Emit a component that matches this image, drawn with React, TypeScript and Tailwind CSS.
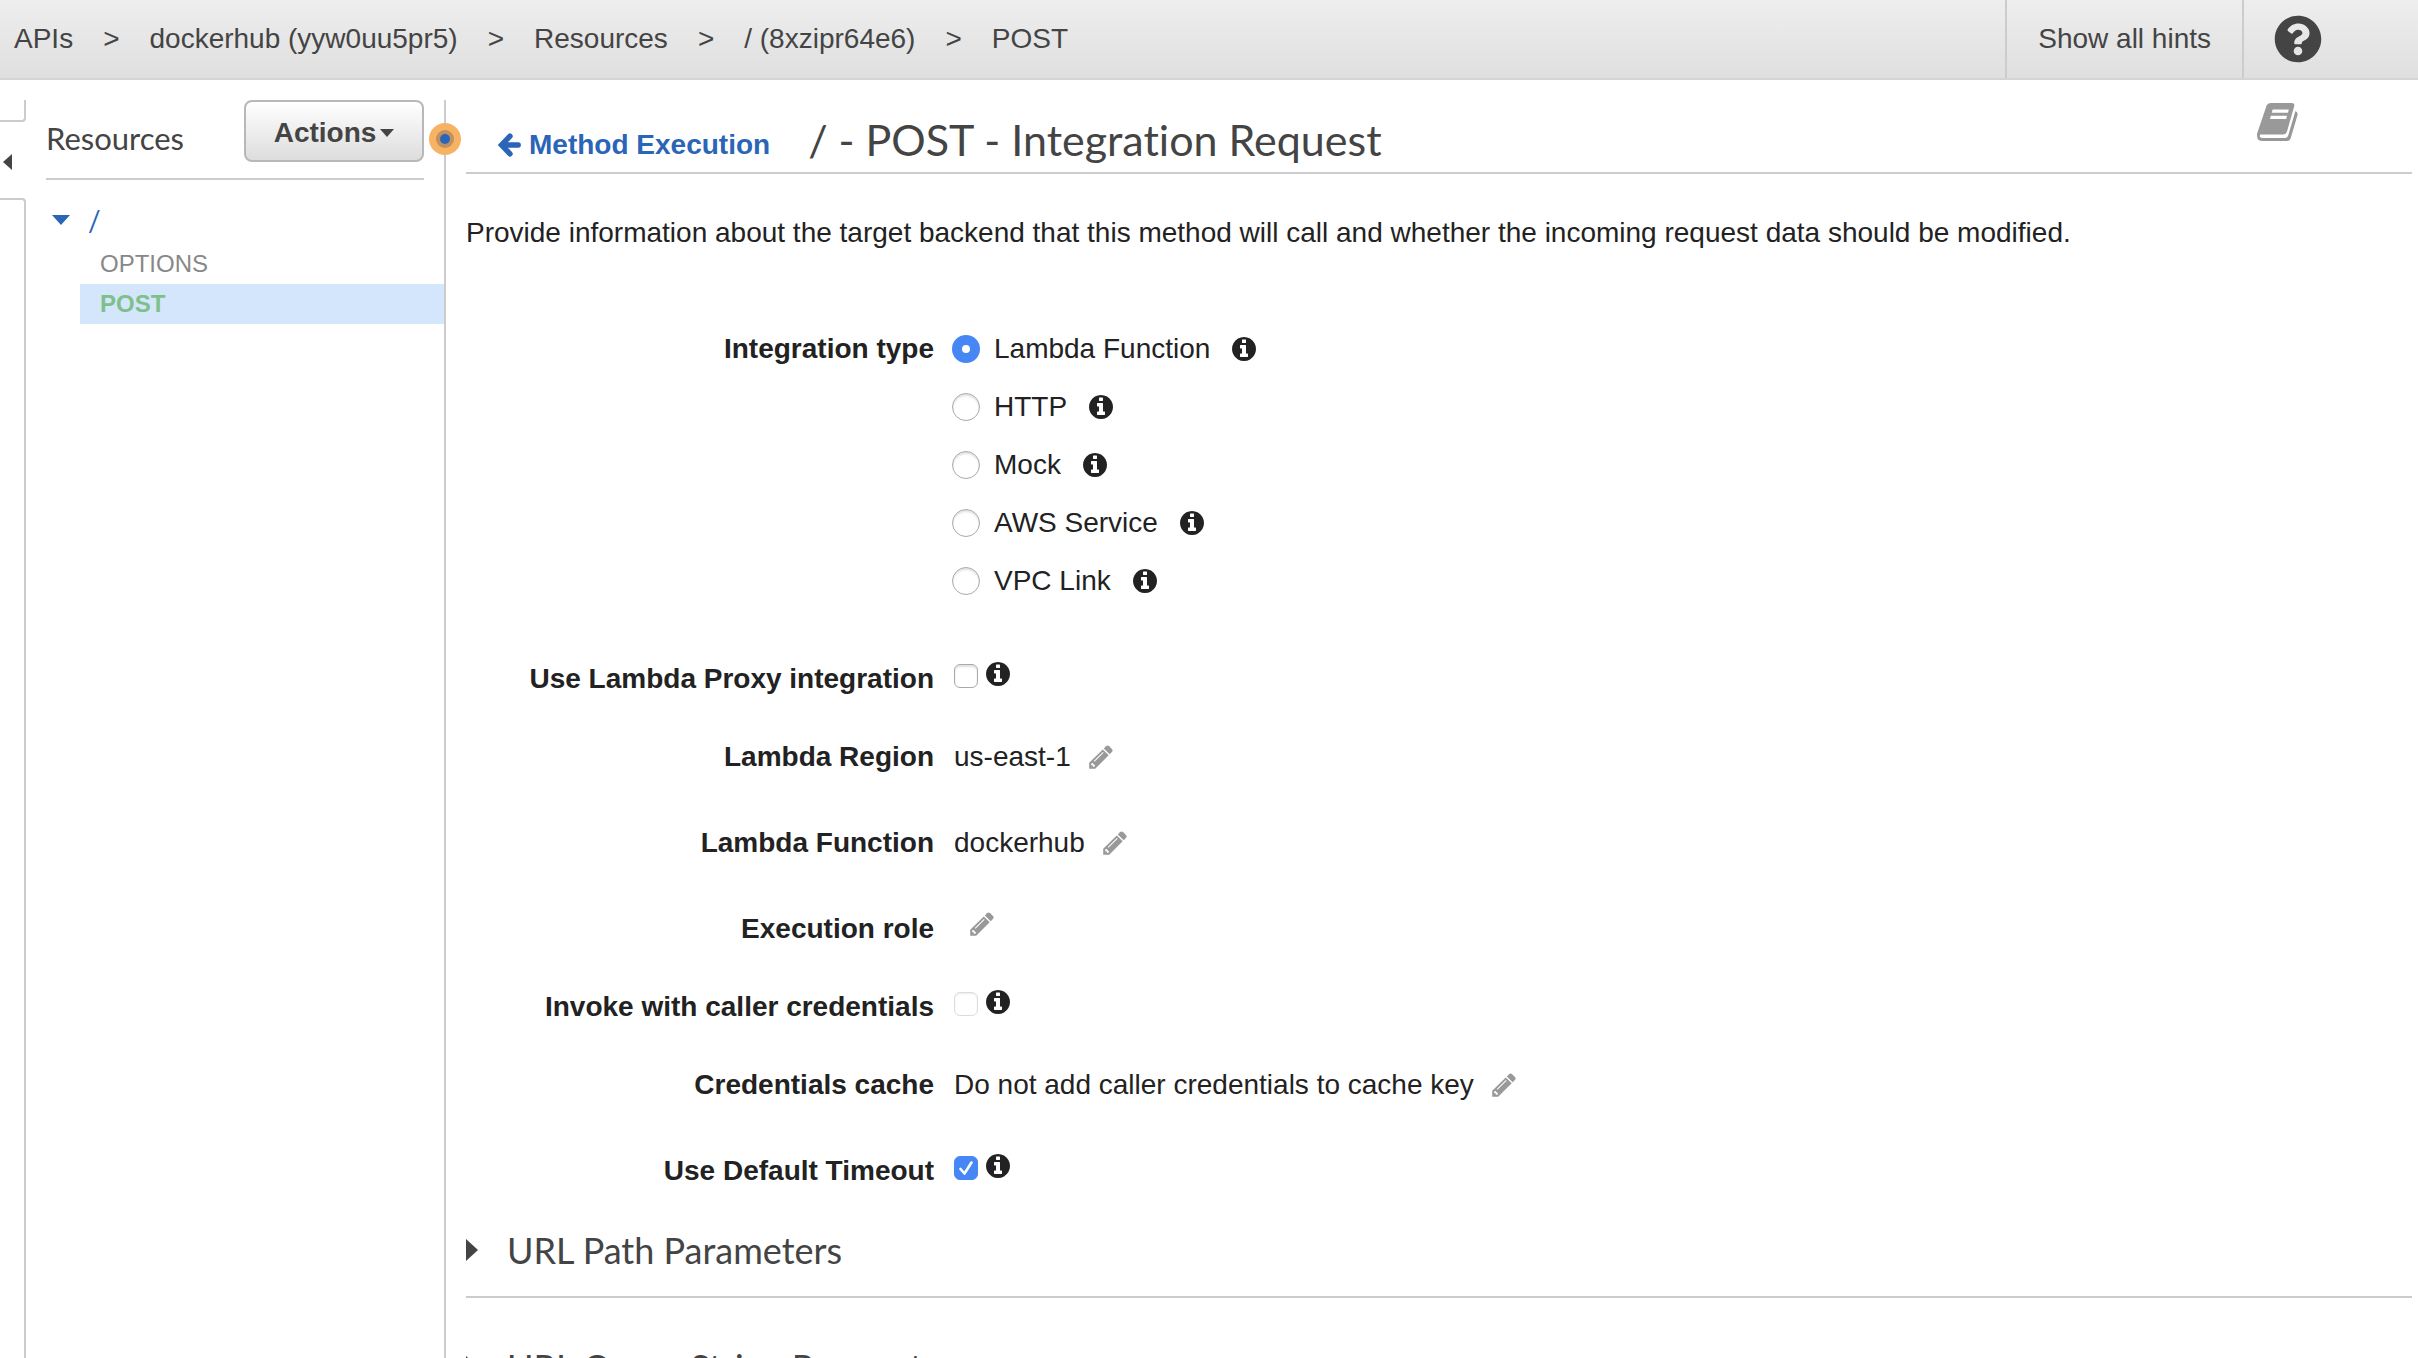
import React from "react";
import { FaQuestionCircle } from "react-icons/fa";

const crumbs = ["APIs", "dockerhub (yyw0uu5pr5)", "Resources", "/ (8xzipr64e6)", "POST"];
const types = ["Lambda Function", "HTTP", "Mock", "AWS Service", "VPC Link"];

function Info() {
  return (
    <button type="button" aria-label="More information" className="h-6 w-6 shrink-0 text-[#222]">
      <svg viewBox="128 128 1536 1536" className="h-6 w-6" fill="currentColor">
        <path d="M1152 1376v-160q0-14-9-23t-23-9h-96v-512q0-14-9-23t-23-9h-320q-14 0-23 9t-9 23v160q0 14 9 23t23 9h96v320h-96q-14 0-23 9t-9 23v160q0 14 9 23t23 9h448q14 0 23-9t9-23zm-128-896v-160q0-14-9-23t-23-9h-192q-14 0-23 9t-9 23v160q0 14 9 23t23 9h192q14 0 23-9t9-23zm640 416q0 209-103 385.5t-279.5 279.5-385.5 103-385.5-103-279.5-279.5-103-385.5 103-385.5 279.5-279.5 385.5-103 385.5 103 279.5 279.5 103 385.5z" />
      </svg>
    </button>
  );
}

function Pencil() {
  return (
    <button type="button" aria-label="Edit" className="h-6 w-6 shrink-0 text-[#999]">
      <svg viewBox="0 0 24 24" className="h-6 w-6" fill="currentColor">
        <path d="M17 1.2Q18.6-.4 20.2 1.2L22.9 3.9Q24.4 5.5 22.9 7.1L20.7 9.3 14.8 3.4Z" />
        <path fillRule="evenodd" d="M13.8 4.4L19.7 10.3 6.2 23.8H.2V17.8ZM13.9 7L4.8 16.1 5.5 16.8 14.6 7.7ZM3.2 17.8L2.2 18.8V20.2H3.8V21.8H5.2L6.2 20.8Z" />
      </svg>
    </button>
  );
}

function Check({ id, checked = false, disabled = false }: { id: string; checked?: boolean; disabled?: boolean }) {
  return (
    <span className="mt-0.5 grid h-6 w-6 shrink-0 place-items-center">
      <input
        id={id}
        type="checkbox"
        defaultChecked={checked}
        disabled={disabled}
        className="peer col-start-1 row-start-1 h-6 w-6 appearance-none rounded-md border border-[#aaa] bg-white shadow-[inset_0_2px_2px_rgba(0,0,0,0.12)] checked:border-[#4787f5] checked:bg-[#4787f5] checked:shadow-none disabled:border-[#ddd] disabled:shadow-[inset_0_1px_2px_rgba(0,0,0,0.08)]"
      />
      <svg viewBox="0 0 24 24" fill="none" stroke="white" strokeWidth="2.6" strokeLinecap="round" strokeLinejoin="round" className="pointer-events-none col-start-1 row-start-1 hidden h-6 w-6 peer-checked:block">
        <path d="M6.5 13L10.5 17.5 17.5 6.5" />
      </svg>
    </span>
  );
}

function TextRow({ label, value }: { label: string; value: string }) {
  return (
    <div className="grid grid-cols-[468px_1fr] gap-x-5 pb-[50px]">
      <span className="text-right font-bold">{label}</span>
      <div className="flex h-9 items-center gap-[18px]">
        <span>{value}</span>
        <Pencil />
      </div>
    </div>
  );
}

function CheckRow({ id, label, checked, disabled }: { id: string; label: string; checked?: boolean; disabled?: boolean }) {
  return (
    <div className="grid grid-cols-[468px_1fr] gap-x-5 pb-[42px]">
      <label htmlFor={id} className="text-right font-bold">{label}</label>
      <div className="flex h-9 items-start gap-2 pt-px">
        <Check id={id} checked={checked} disabled={disabled} />
        <Info />
      </div>
    </div>
  );
}

function Section({ title }: { title: string }) {
  return (
    <section className="mb-[43px] border-b-2 border-[#ccc] pb-5">
      <h2>
        <button type="button" className="flex items-center gap-[29px] font-['Lato',sans-serif] text-4xl leading-[52px] text-[#444]">
          <svg viewBox="0 0 12 22" className="h-[22px] w-3" fill="currentColor"><path d="M0 0L12 11 0 22Z" /></svg>
          {title}
        </button>
      </h2>
    </section>
  );
}

export default function App() {
  return (
    <div className="flex h-screen flex-col overflow-hidden bg-white font-['Liberation_Sans',Arial,sans-serif] text-[28px] leading-9 text-[#222] [font-variant-ligatures:none]">
      <header className="flex h-20 shrink-0 items-stretch border-b-2 border-[#d4d4d4] bg-linear-to-b from-[#eee] to-[#dfdfdf] text-[#444]">
        <nav aria-label="Breadcrumb" className="flex flex-1 items-center pl-3.5">
          <ol className="flex items-center gap-[30px]">
            {crumbs.map((c, i) => (
              <li key={c} className="flex items-center gap-[30px]">
                {i > 0 && <span>&gt;</span>}
                <a href="#">{c}</a>
              </li>
            ))}
          </ol>
        </nav>
        <button type="button" className="border-l-2 border-[#ccc] px-[31px]">Show all hints</button>
        <div className="flex w-44 items-center border-l-2 border-[#ccc] pl-[30px]">
          <button type="button" aria-label="Help"><FaQuestionCircle className="h-12 w-12" /></button>
        </div>
      </header>

      <div className="flex min-h-0 flex-1 pt-5">
        <div className="flex w-[26px] shrink-0 flex-col">
          <div className="h-[22px] rounded-br-sm border-r-2 border-b-2 border-[#ccc]" />
          <button type="button" aria-label="Collapse panel" className="flex h-[76px] items-center pt-1 pl-[3px] text-[#444]">
            <svg viewBox="0 0 9 16" className="h-4 w-[9px]" fill="currentColor"><path d="M9 0V16L0 8Z" /></svg>
          </button>
          <div className="flex-1 rounded-tr-sm border-t-2 border-r-2 border-[#ccc]" />
        </div>

        <aside className="relative w-[420px] shrink-0 border-r-2 border-[#ccc] pl-5">
          <div className="mr-5 flex h-20 items-start justify-between border-b-2 border-[#ccc]">
            <h2 className="pt-5 font-['Lato',sans-serif] text-[31px] text-[#444]">Resources</h2>
            <button type="button" className="flex h-[62px] w-[180px] items-center justify-center gap-1 rounded-lg border-2 border-[#b8b8b8] bg-linear-to-b from-white to-[#ddd] pt-1 font-bold text-[#444]">
              Actions
              <svg viewBox="0 0 14 8" className="h-2 w-3.5" fill="currentColor"><path d="M0 0H14L7 8Z" /></svg>
            </button>
          </div>
          <ul className="pt-5">
            <li>
              <a href="#" className="flex h-10 items-center gap-[18px] pl-1.5 text-[#2a65b8]">
                <svg viewBox="0 0 18 10" className="h-2.5 w-[18px]" fill="currentColor"><path d="M0 0H18L9 10Z" /></svg>
                <span className="font-['Lato',sans-serif] text-[28px]">/</span>
              </a>
              <ul className="pt-1 pl-[34px] text-2xl">
                <li><a href="#" className="flex h-10 items-center pl-5 text-[#888]">OPTIONS</a></li>
                <li><a href="#" className="flex h-10 items-center bg-[#d4e6fc] pl-5 font-bold text-[#7fc08a]">POST</a></li>
              </ul>
            </li>
          </ul>
          <span className="absolute top-[23px] -right-[17px] grid h-8 w-8 place-items-center rounded-full bg-[#f7b363]">
            <span className="grid h-[18px] w-[18px] place-items-center rounded-full bg-[#bf9060]">
              <span className="h-2.5 w-2.5 rounded-full bg-[#2a65b8]" />
            </span>
          </span>
        </aside>

        <main className="min-w-0 flex-1 overflow-hidden pr-1.5 pl-5">
          <div className="flex h-[74px] items-start border-b-2 border-[#ccc] pl-8">
            <a href="#" className="flex items-center gap-2 pt-[27px] font-bold text-[#2a65b8]">
              <svg viewBox="0 0 23 24" className="h-6 w-[23px]" fill="none" stroke="currentColor" strokeWidth="5.4" strokeLinecap="round" strokeLinejoin="miter">
                <path d="M12 3.2L3.6 12 12 20.8M5 12H20.2" />
              </svg>
              Method Execution
            </a>
            <h1 className="flex-1 pt-[18px] pl-[38px] font-['Lato',sans-serif] text-[43px] leading-[44px] text-[#444]">/ - POST - Integration Request</h1>
            <button type="button" aria-label="Documentation" className="mt-[3px] mr-[114px] text-[#999]">
              <svg viewBox="0 0 41 38" className="h-[38px] w-[41px]" fill="currentColor">
                <path fillRule="evenodd" d="M13.5 0H34.5Q38 0 37.2 3.2L30 28.6Q29 31.6 26 31.6H3.5Q2.6 32.4 2.8 33.6 3.2 35 5 35H28.2Q30.4 35 31.2 32.6L38.4 8Q41.4 9.5 40.4 12.5L33.6 35.4Q32.6 38 30 38H5.5Q0 38 0 32.5 0 30.5.8 28.5L9.6 2.6Q10.6 0 13.5 0ZM15.6 6.6L14.8 9.8H31L31.8 6.6ZM13.8 12.8L13 16H29.2L30 12.8Z" />
              </svg>
            </button>
          </div>
          <p className="pt-[41px]">Provide information about the target backend that this method will call and whether the incoming request data should be modified.</p>

          <form className="pt-20">
            <fieldset className="grid grid-cols-[468px_1fr] gap-x-[18px]">
              <span id="type-label" className="text-right font-bold">Integration type</span>
              <div className="flex flex-col gap-[22px]" role="radiogroup" aria-labelledby="type-label">
                {types.map((t, i) => (
                  <div key={t} className="flex h-9 items-center gap-[22px]">
                    <label className="flex items-center gap-3.5">
                      <input type="radio" name="type" defaultChecked={i === 0} className="h-7 w-7 appearance-none rounded-full border border-[#aaa] bg-white shadow-[inset_0_2px_2px_rgba(0,0,0,0.12)] checked:border-[10px] checked:border-[#4787f5] checked:shadow-none" />
                      {t}
                    </label>
                    <Info />
                  </div>
                ))}
              </div>
            </fieldset>
            <div className="pt-[62px]">
              <CheckRow id="proxy" label="Use Lambda Proxy integration" />
              <TextRow label="Lambda Region" value="us-east-1" />
              <TextRow label="Lambda Function" value="dockerhub" />
              <div className="grid grid-cols-[468px_1fr] gap-x-5 pb-[42px]">
                <span className="text-right font-bold">Execution role</span>
                <div className="flex h-9 items-start pt-px pl-4"><Pencil /></div>
              </div>
              <CheckRow id="caller" label="Invoke with caller credentials" disabled />
              <TextRow label="Credentials cache" value="Do not add caller credentials to cache key" />
              <CheckRow id="timeout" label="Use Default Timeout" checked />
            </div>
          </form>
          <div className="-mt-[7px]">
            <Section title="URL Path Parameters" />
            <Section title="URL Query String Parameters" />
          </div>
        </main>
      </div>
    </div>
  );
}
